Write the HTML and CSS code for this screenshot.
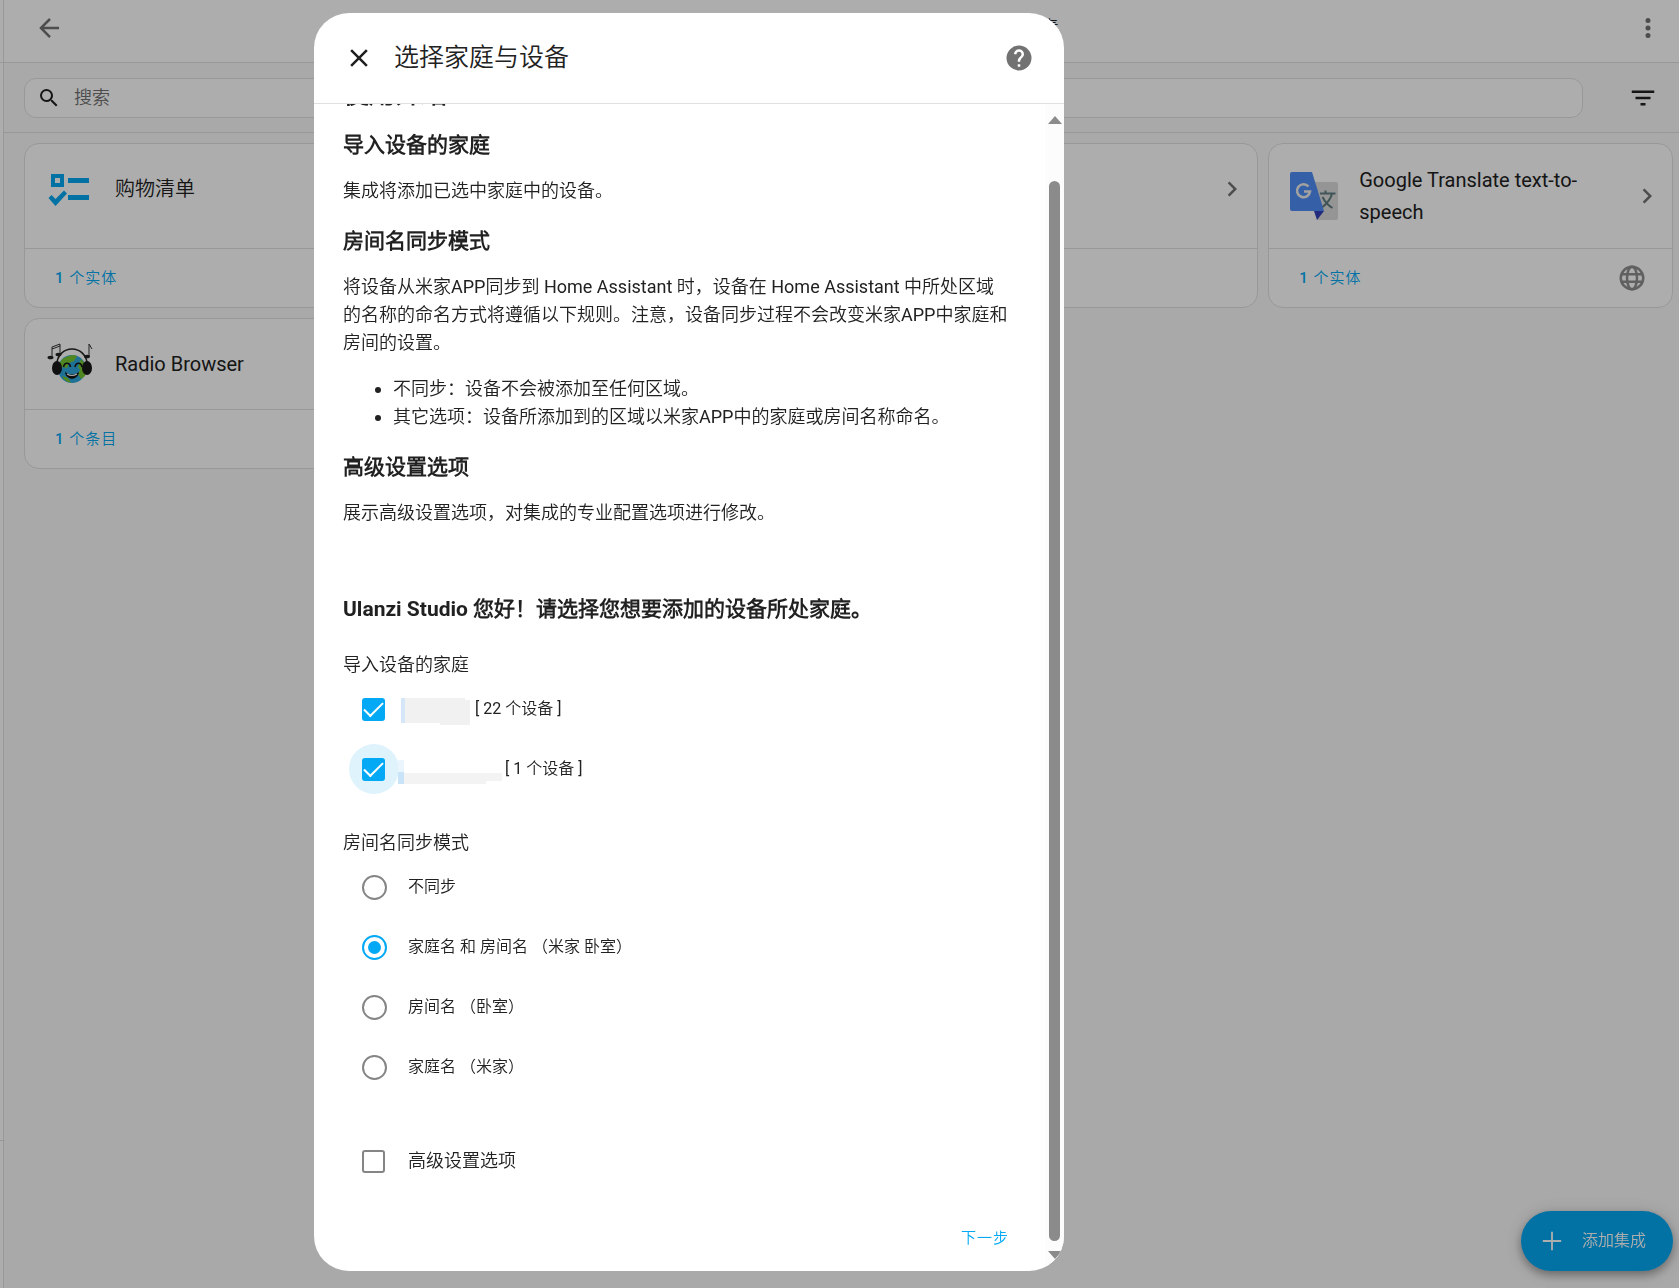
FILE: index.html
```html
<!DOCTYPE html>
<html lang="zh-CN">
<head>
<meta charset="utf-8">
<title>选择家庭与设备</title>
<link rel="stylesheet" href="styles.css">
</head>
<body>
<div class="app">
  <aside class="sidebar"><div class="sidebar-head"></div><div class="sidebar-foot"></div></aside>
  <main class="main">
    <header class="toolbar">
      <button class="icon-btn" aria-label="返回"><svg class="icon" viewBox="0 0 24 24"><path d="M20 11v2H8l5.500 5.500-1.420 1.420L4.160 12l7.920-7.920L13.500 5.500 8 11z"/></svg></button>
      <nav class="tabs"><a href="#">集成</a><a href="#">设备</a><a href="#">实体</a><a href="#">辅助元素</a></nav>
      <button class="icon-btn" aria-label="更多"><svg class="icon" viewBox="0 0 24 24"><path d="M12 16a2 2 0 1 1 0 4 2 2 0 0 1 0-4m0-6a2 2 0 1 1 0 4 2 2 0 0 1 0-4m0-6a2 2 0 1 1 0 4 2 2 0 0 1 0-4"/></svg></button>
    </header>
    <div class="search-row">
      <label class="search">
        <svg class="icon search-icon" viewBox="0 0 24 24"><path d="M9.500 3A6.500 6.500 0 0 1 16 9.500c0 1.610-.59 3.090-1.560 4.230l.27.27h.79l5 5-1.500 1.500-5-5v-.79l-.27-.27A6.516 6.516 0 0 1 9.500 16a6.500 6.500 0 0 1 0-13m0 2C7 5 5 7 5 9.500S7 14 9.500 14 14 12 14 9.500 12 5 9.500 5"/></svg>
        <input type="search" placeholder="搜索" aria-label="搜索">
      </label>
      <button class="icon-btn dark" aria-label="筛选"><svg class="icon" viewBox="0 0 24 24"><path d="M6 11h12v2H6zM3 6h18v2H3zm7 10h4v2h-4z"/></svg></button>
    </div>
    <div class="cards">
      <article class="card">
        <div class="card-head">
          <svg class="brand" viewBox="0 0 50 50" fill="#03a9f4"><path fill-rule="evenodd" d="M6 10h13v13H6zm4 4v5h5v-5zM23 14h21v5H23zM23 31h21v5H23zM3.500 34 6.500 31l4 4L19 26.500l3 3L10.500 42z"/></svg>
          <span class="card-name">购物清单</span>
          <svg class="icon chevron" viewBox="0 0 24 24"><path d="M8.590 16.580 13.170 12 8.590 7.410 10 6l6 6-6 6z"/></svg>
        </div>
        <div class="card-actions"><a href="#">1 个实体</a></div>
      </article>
      <article class="card">
        <div class="card-head"><span class="card-name"></span><svg class="icon chevron" viewBox="0 0 24 24"><path d="M8.590 16.580 13.170 12 8.590 7.410 10 6l6 6-6 6z"/></svg></div>
        <div class="card-actions"></div>
      </article>
      <article class="card">
        <div class="card-head"><span class="card-name"></span><svg class="icon chevron" viewBox="0 0 24 24"><path d="M8.590 16.580 13.170 12 8.590 7.410 10 6l6 6-6 6z"/></svg></div>
        <div class="card-actions"></div>
      </article>
      <article class="card">
        <div class="card-head">
          <svg class="brand" viewBox="0 0 50 50">
            <path d="M22 11h25a2 2 0 0 1 2 2v34a2 2 0 0 1-2 2H28z" fill="#dcdcdc"/>
            <path d="M31 22.500h15.500M36.500 19.500v3M43 22.500c-1 5-5 10-10 14M33.500 26c2 4 5 8 10 11" fill="none" stroke="#607d80" stroke-width="2"/>
            <path d="M25 40h10l-7 9z" fill="#3340b8"/>
            <path d="M3 1h20l12 39H3a2 2 0 0 1-2-2V3a2 2 0 0 1 2-2z" fill="#4f8df5"/>
            <path d="M19.500 15.500a6.500 6.500 0 1 0 1.500 5h-6" fill="none" stroke="#eee" stroke-width="2.600"/>
          </svg>
          <span class="card-name">Google Translate text-to-speech</span>
          <svg class="icon chevron" viewBox="0 0 24 24"><path d="M8.590 16.580 13.170 12 8.590 7.410 10 6l6 6-6 6z"/></svg>
        </div>
        <div class="card-actions"><a href="#">1 个实体</a>
          <svg class="icon globe" viewBox="0 0 24 24"><g fill="none" stroke="#8e8e8e" stroke-width="2"><circle cx="12" cy="12" r="9"/><ellipse cx="12" cy="12" rx="4" ry="9"/><path d="M4 9h16M4 15h16"/></g></svg>
        </div>
      </article>
      <article class="card">
        <div class="card-head">
          <svg class="brand" viewBox="-2 -1 50 50">
            <path d="M10 24a15 15 0 0 1 30 0" fill="none" stroke="#222" stroke-width="1.500"/>
            <circle cx="25" cy="29" r="14" fill="#2fa8dc"/>
            <path d="M19 17c4-2 9-2 11-1l-3 5-5 2-2 5-5-1-3 3c-1-6 2-11 7-13zM34 19c5 4 6 12 4 17l-4 3-3-5 2-4-2-3zM15 36l6 2 3 5c-4-1-7-3-9-7z" fill="#78c832"/>
            <path d="M16.500 27c1-5 6-5 7 0M28 27c1-5 6-5 7 0" fill="none" stroke="#151515" stroke-width="1.700"/>
            <path d="M18 32q7 5 14 0c-1 9-13 9-14 0z" fill="#151515"/><path d="M20 34q5 3 10 0" fill="none" stroke="#fff" stroke-width="1.200"/>
            <ellipse cx="10" cy="28" rx="5" ry="7" fill="#181818"/><ellipse cx="40" cy="28" rx="5" ry="7" fill="#181818"/>
            <path d="M5 17V7l8-3v10M5 9l8-3M42 16V4l3 5" fill="none" stroke="#333" stroke-width="1"/>
            <ellipse cx="3.500" cy="17.500" rx="3" ry="1.800" fill="#222"/><ellipse cx="11.500" cy="14.500" rx="3" ry="1.800" fill="#222"/><ellipse cx="40" cy="16.500" rx="3" ry="1.800" fill="#222"/>
          </svg>
          <span class="card-name">Radio Browser</span>
          <svg class="icon chevron" viewBox="0 0 24 24"><path d="M8.590 16.580 13.170 12 8.590 7.410 10 6l6 6-6 6z"/></svg>
        </div>
        <div class="card-actions"><a href="#">1 个条目</a></div>
      </article>
    </div>
  </main>
  <button class="fab"><svg class="icon" viewBox="0 0 24 24"><path d="M22 13h-9v9h-2v-9H2v-2h9V2h2v9h9z"/></svg>添加集成</button>
</div>

<div class="scrim">
  <section class="dialog" role="dialog" aria-labelledby="dialog-title">
    <header class="dialog-head">
      <button class="icon-btn dark" aria-label="关闭"><svg class="icon" viewBox="0 0 24 24"><path d="M19 6.410 17.590 5 12 10.590 6.410 5 5 6.410 10.590 12 5 17.590 6.410 19 12 13.410 17.590 19 19 17.590 13.410 12z"/></svg></button>
      <h1 id="dialog-title">选择家庭与设备</h1>
      <button class="icon-btn" aria-label="帮助"><svg class="icon" viewBox="0 0 24 24"><path d="M15.070 11.250l-.9.920C13.450 12.890 13 13.500 13 15h-2v-.5c0-1.110.45-2.110 1.170-2.830l1.240-1.260c.37-.36.59-.86.59-1.410a2 2 0 0 0-4 0H8a4 4 0 0 1 8 0c0 .88-.36 1.670-.93 2.250M13 19h-2v-2h2M12 2a10 10 0 1 0 0 20 10 10 0 0 0 0-20"/></svg></button>
    </header>
    <div class="dialog-body">
      <form class="content">
        <h2>使用介绍</h2>
        <h3>导入设备的家庭</h3>
        <p>集成将添加已选中家庭中的设备。</p>
        <h3>房间名同步模式</h3>
        <p>将设备从米家APP同步到 Home Assistant 时，设备在 Home Assistant 中所处区域的名称的命名方式将遵循以下规则。注意，设备同步过程不会改变米家APP中家庭和房间的设置。</p>
        <ul>
          <li>不同步：设备不会被添加至任何区域。</li>
          <li>其它选项：设备所添加到的区域以米家APP中的家庭或房间名称命名。</li>
        </ul>
        <h3>高级设置选项</h3>
        <p>展示高级设置选项，对集成的专业配置选项进行修改。</p>
        <h3 class="greeting">Ulanzi Studio 您好！请选择您想要添加的设备所处家庭。</h3>
        <fieldset>
          <legend>导入设备的家庭</legend>
          <label class="option home">
            <span class="slot"><input type="checkbox" checked></span>
            <svg class="mask" width="72" height="30" viewBox="0 0 72 30"><path d="M2 4h64v2h5v25H41v-2H2z" fill="#f1f1f1"/><path d="M2 4h4v25H2z" fill="#d4e6f7"/></svg>
            <span>[ 22 个设备 ]</span>
          </label>
          <label class="option home">
            <span class="slot halo"><input type="checkbox" checked></span>
            <svg class="mask" width="102" height="30" viewBox="0 0 102 30"><path d="M5 19h98v8H87v3H5z" fill="#f3f3f3"/><path d="M-1 6h6v13h-6z" fill="#eaf5fd"/><path d="M-1 18h6v12h-6z" fill="#c9e4f8"/></svg>
            <span>[ 1 个设备 ]</span>
          </label>
        </fieldset>
        <fieldset>
          <legend>房间名同步模式</legend>
          <label class="option"><span class="slot"><input type="radio" name="mode"></span><span>不同步</span></label>
          <label class="option"><span class="slot"><input type="radio" name="mode" checked></span><span>家庭名 和 房间名 （米家 卧室）</span></label>
          <label class="option"><span class="slot"><input type="radio" name="mode"></span><span>房间名 （卧室）</span></label>
          <label class="option"><span class="slot"><input type="radio" name="mode"></span><span>家庭名 （米家）</span></label>
        </fieldset>
        <label class="option advanced"><span class="slot"><input type="checkbox"></span><span>高级设置选项</span></label>
        <div class="actions"><button type="button" class="next">下一步</button></div>
      </form>
      <div class="scrollbar" aria-hidden="true">
        <svg width="14" height="8" viewBox="0 0 14 8"><path d="M0 8 7 0l7 8z"/></svg>
        <div class="thumb"></div>
        <svg width="14" height="8" viewBox="0 0 14 8"><path d="M0 0h14L7 8z"/></svg>
      </div>
    </div>
  </section>
</div>
</body>
</html>
```
FILE: styles.css
```css
* { box-sizing: border-box; }
body {
  margin: 0;
  background: #fafafa;
  color: #212121;
  font: 18px/28px Roboto, "Noto Sans CJK SC DemiLight", "Noto Sans CJK SC", sans-serif;
}
button { padding: 0; border: 0; background: none; font: inherit; color: inherit; }
a { color: inherit; text-decoration: none; }
.icon { display: block; flex: none; width: 30px; height: 30px; fill: currentColor; }
.icon-btn { flex: none; color: #727272; }
.icon-btn.dark { color: #212121; }

/* Page behind the dialog */
.app { display: flex; min-height: 100vh; }
.sidebar {
  display: flex; flex: none; flex-direction: column; justify-content: space-between;
  width: 4px; background: #fff; border-right: 1px solid #e0e0e0;
}
.sidebar-head { height: 63px; border-bottom: 1px solid #e0e0e0; }
.sidebar-foot { height: 148px; border-top: 1px solid #e0e0e0; }
.main { flex: 1; min-width: 0; }
.toolbar {
  display: flex; align-items: center; justify-content: space-between;
  height: 63px; padding: 0 16px 7px 30px;
  background: #fff; border-bottom: 1px solid #e0e0e0;
}
.tabs { display: flex; gap: 80px; }
.search-row {
  display: flex; align-items: center; gap: 45px;
  height: 70px; padding: 0 21px 0 20px;
  border-bottom: 1px solid #e0e0e0;
}
.search {
  display: flex; flex: 1; align-items: center; gap: 13px;
  height: 40px; padding-left: 12px;
  background: #fff; border: 1px solid #e0e0e0; border-radius: 12px;
}
.search-icon { width: 24px; height: 24px; }
.search input { flex: 1; padding: 0; border: 0; outline: 0; background: none; font: inherit; color: inherit; }
.search input::placeholder { color: #727272; opacity: 1; }
.cards { display: grid; grid-template-columns: repeat(4, 1fr); gap: 10px; padding: 10px 6px 0 20px; }
.card {
  display: flex; flex-direction: column; min-width: 0;
  background: #fff; border: 1px solid #e0e0e0; border-radius: 15px;
}
.card-head { display: flex; align-items: center; gap: 20px; min-height: 90px; padding: 20px 10px 20px 20px; }
.brand { flex: none; width: 50px; height: 50px; overflow: visible; }
.card-name { flex: 1; min-width: 0; font-size: 20px; line-height: 32px; }
.chevron { color: #727272; }
.card-actions {
  display: flex; align-items: center; justify-content: space-between;
  height: 59px; margin-top: auto; padding: 0 25px 0 30px;
  border-top: 1px solid #e0e0e0;
  color: #03a9f4; font-size: 15px; font-weight: 500; letter-spacing: 1px;
}
.fab {
  position: fixed; right: 6px; bottom: 17px;
  display: flex; align-items: center; gap: 15px;
  height: 60px; padding: 0 27px 0 16px; border-radius: 30px;
  background: #03a9f4; color: #fff; font-size: 16px; font-weight: 500;
  box-shadow: 0 4px 8px rgba(0, 0, 0, .3), 0 2px 20px rgba(0, 0, 0, .15);
}
.fab .icon { width: 30px; height: 22px; }

/* Dialog */
.scrim {
  position: fixed; inset: 0; display: flex;
  padding: 13px 0 17px 314px; background: rgba(0, 0, 0, .32);
}
.dialog {
  display: flex; flex-direction: column;
  width: 750px; overflow: hidden; background: #fff; border-radius: 35px;
}
.dialog-head {
  display: flex; flex: none; align-items: center; gap: 20px;
  height: 91px; padding: 0 30px; border-bottom: 1px solid #e0e0e0;
}
h1 { flex: 1; margin: 0; font-size: 25px; font-weight: 400; line-height: 32px; }
.dialog-body { display: flex; flex: 1; min-height: 0; overflow: hidden; }
.content { flex: 1; min-width: 0; padding: 0 35px 0 29px; }
h2 { margin: -28px 0 19px; font-size: 26px; line-height: 36px; font-weight: 700; }
h3 { margin: 22px 0 18px; font-size: 21px; line-height: 28px; font-weight: 700; }
h2 + h3 { margin-top: 19px; }
p { margin: 0 0 18px; }
ul { margin: 0; padding-left: 50px; }
.greeting { margin: 68px 0 28px; }
fieldset { min-width: 0; margin: 0 0 30px; padding: 0; border: 0; }
legend { padding: 0; }
.option { display: flex; align-items: center; gap: 11px; height: 60px; padding-left: 6px; font-size: 16px; }
.option.home { gap: 4px; }
.option.advanced { margin-top: 34px; font-size: 18px; }
.slot { display: flex; flex: none; width: 48px; height: 50px; padding-left: 13px; align-items: center; position: relative; }
.home .slot { width: 46px; }
.halo::before { content: ""; position: absolute; inset: 0 -4px 0 0; border-radius: 50%; background: #dff3fd; }
.mask { flex: none; overflow: visible; position: relative; }
input[type="checkbox"], input[type="radio"] {
  position: relative; display: grid; place-items: center; flex: none;
  appearance: none; margin: 0; border: 2px solid #858585; background: #fff;
}
input[type="checkbox"] { width: 23px; height: 23px; border-radius: 3px; }
input[type="checkbox"]:checked { border-color: #03a9f4; background: #03a9f4; }
input[type="checkbox"]:checked::before {
  content: ""; width: 17px; height: 8px; margin-bottom: 5px;
  border: solid #fff; border-width: 0 0 2px 2px; transform: rotate(-45deg);
}
input[type="radio"] { width: 25px; height: 25px; border-radius: 50%; }
input[type="radio"]:checked { border-color: #03a9f4; }
input[type="radio"]:checked::before { content: ""; width: 13px; height: 13px; border-radius: 50%; background: #03a9f4; }
.actions { display: flex; justify-content: flex-end; margin-top: 33px; padding-right: 1px; }
.next { color: #03a9f4; font-size: 15px; font-weight: 500; letter-spacing: 1px; }
.scrollbar {
  display: flex; flex: none; flex-direction: column; align-items: center;
  width: 19px; padding: 12px 0; background: #fcfcfc;
}
.scrollbar svg { flex: none; fill: #8b8b8b; }
.thumb { flex: 1; width: 11px; margin: 57px 0 10px; border-radius: 6px; background: #8b8b8b; }
```
